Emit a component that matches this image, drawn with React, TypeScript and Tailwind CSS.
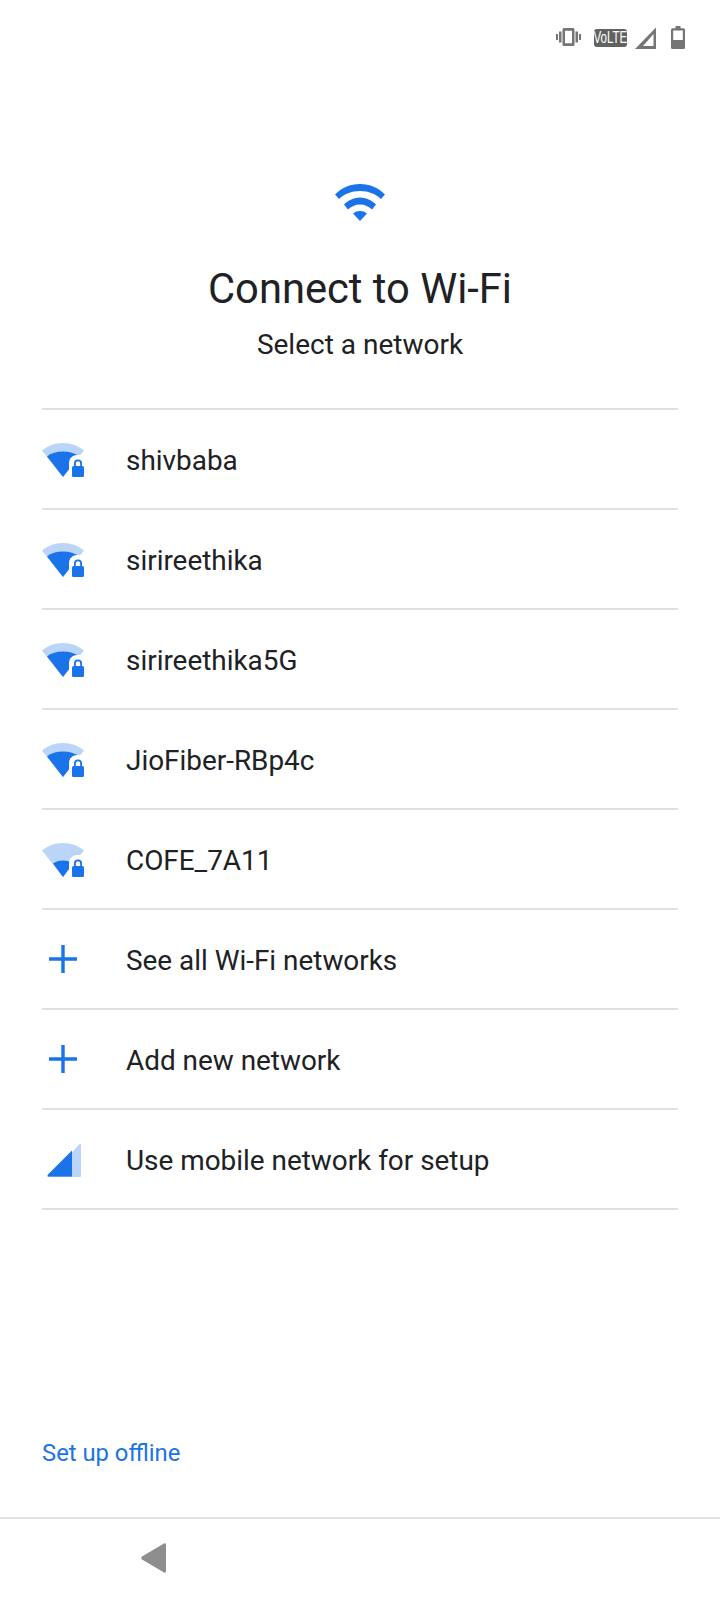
import type { ReactNode } from "react";

const BLUE = "#1a73e8";
const LIGHT = "#bbd5f8";

function VibrateIcon() {
  return (
    <svg width="25" height="18" viewBox="0 0 25 18" fill="#757575" aria-hidden>
      <path d="M0 6h2v6H0zM3 3.500h2.500v11H3zM19.500 3.500H22v11h-2.500zM23 6h2v6h-2z" />
      <path fillRule="evenodd" d="M8 0h9a1.500 1.500 0 0 1 1.500 1.500v15A1.500 1.500 0 0 1 17 18H8a1.500 1.500 0 0 1-1.500-1.500v-15A1.500 1.500 0 0 1 8 0zm1 2.800v12.400h7V2.800z" />
    </svg>
  );
}

function SignalOutline() {
  return (
    <svg width="22" height="22" viewBox="0 0 22 22" fill="#757575" aria-hidden>
      <path fillRule="evenodd" d="M21 0.500V22H0zM18.500 7 8 19h10.500z" />
    </svg>
  );
}

function BatteryIcon() {
  return (
    <svg width="14" height="23" viewBox="0 0 14 23" fill="#757575" aria-hidden>
      <path fillRule="evenodd" d="M4.500 0h5v2.200H12.500A1.500 1.500 0 0 1 14 3.700V21.500a1.500 1.500 0 0 1-1.500 1.500h-11A1.500 1.500 0 0 1 0 21.500V3.700A1.500 1.500 0 0 1 1.500 2.200H4.500zM2.200 4.400v9.600h9.600V4.400z" />
    </svg>
  );
}

function WifiHero() {
  return (
    <svg width="50" height="38" viewBox="0 0 50 38" fill={BLUE} aria-hidden>
      <path d="M0 10.500C6.500 4 15.200 0 25 0S43.500 4 50 10.500L46 15C41 10 33.500 7 25 7S9 10 4 15z" />
      <path d="M9 20.500C13 16.500 19 13.500 25 13.500s12 3 16 7L37 25.500C33.800 22.500 29.700 20.500 25 20.500S16.200 22.500 13 25.500z" />
      <path d="M18 29.500C20 27.800 22.500 27 25 27s5 .8 7 2.500L25 37z" />
    </svg>
  );
}

function WifiLockIcon({ level }: { level: "high" | "low" }) {
  return (
    <svg width="42" height="34" viewBox="0 0 42 34" aria-hidden>
      <path d="M0 7.500C5 3 12.500 0 21 0S37 3 42 7.500L21 34z" fill={LIGHT} />
      {level === "high" ? (
        <path d="M5 13.500C9 10.200 14.500 8.500 21 8.500S33 10.200 37 13.500L21 34z" fill={BLUE} />
      ) : (
        <path d="M11 20.500C13.800 18.500 17 17.500 21 17.500S28.200 18.500 31 20.500L21 34z" fill={BLUE} />
      )}
      <path d="M27 34V20C27 15 31 12 35 12H42V34z" fill="#fff" />
      <path d="M32 23v-2.500a4 4 0 0 1 8 0V23h-1.800v-2.500a2.200 2.200 0 0 0-4.400 0V23z" fill={BLUE} />
      <rect x="30" y="23" width="12" height="11" rx="1.500" fill={BLUE} />
    </svg>
  );
}

function PlusIcon() {
  return (
    <svg width="28" height="28" viewBox="0 0 28 28" fill={BLUE} aria-hidden>
      <path d="M12.300 0h3.400v12.300H28v3.400H15.700V28h-3.400V15.700H0v-3.400h12.300z" />
    </svg>
  );
}

function MobileIcon() {
  return (
    <svg width="34" height="34" viewBox="0 0 34 34" aria-hidden>
      <path d="M25 9.500 32 1.500C33 0.500 34 1 34 2V32.500C34 33.500 33.500 34 32.500 34H25z" fill={LIGHT} />
      <path d="M25 7.500V34H2C0.500 34 0 32.500 1 31.500z" fill={BLUE} />
      <path d="M1 33H25V34H2C1 34 0.500 33.600 1 33z" fill="#5f9bee" />
    </svg>
  );
}

const rows: { label: string; icon: ReactNode; box: string }[] = [
  { label: "shivbaba", icon: <WifiLockIcon level="high" />, box: "pl-0 pt-[2px]" },
  { label: "sirireethika", icon: <WifiLockIcon level="high" />, box: "pl-0 pt-[2px]" },
  { label: "sirireethika5G", icon: <WifiLockIcon level="high" />, box: "pl-0 pt-[2px]" },
  { label: "JioFiber-RBp4c", icon: <WifiLockIcon level="high" />, box: "pl-0 pt-[2px]" },
  { label: "COFE_7A11", icon: <WifiLockIcon level="low" />, box: "pl-0 pt-[2px]" },
  { label: "See all Wi-Fi networks", icon: <PlusIcon />, box: "pl-[7px]" },
  { label: "Add new network", icon: <PlusIcon />, box: "pl-[7px]" },
  { label: "Use mobile network for setup", icon: <MobileIcon />, box: "pl-[5px] pt-[2px]" },
];

export default function App() {
  return (
    <div className="flex h-[1600px] w-[720px] flex-col bg-white font-['Roboto',sans-serif] text-[#202124]">
      <div className="flex h-[74px] items-start justify-end pr-[35px] pt-[26px]">
        <div className="mt-[2px]"><VibrateIcon /></div>
        <div className="ml-[13px] mt-[3px] flex h-[18px] w-[33px] items-center justify-center overflow-hidden rounded-[3px] bg-[#616161] font-['Liberation_Sans',sans-serif] text-[16px] leading-none text-white">
          <span className="scale-x-[0.72]">VoLTE</span>
        </div>
        <div className="ml-[8px] mt-[1px]"><SignalOutline /></div>
        <div className="ml-[14px]"><BatteryIcon /></div>
      </div>

      <div className="ml-[335px] mt-[110px] w-[50px]"><WifiHero /></div>
      <h1 className="mt-[41px] text-center text-[41.7px] font-normal leading-[52px]">Connect to Wi-Fi</h1>
      <p className="mt-[12px] text-center text-[28px] leading-[36px]">Select a network</p>

      <ul className="mx-[42px] mt-[45px] border-t-2 border-[#e0e0e0]">
        {rows.map((row) => (
          <li key={row.label} className="flex h-[100px] items-center border-b-2 border-[#e0e0e0]">
            <div className={`w-[84px] ${row.box}`}>{row.icon}</div>
            <span className="pt-[4px] text-[27.9px] leading-[36px]">{row.label}</span>
          </li>
        ))}
      </ul>

      <div className="mt-auto px-[42px] pb-[46px] text-[23.8px] leading-[36px] text-[#1a73e8]">Set up offline</div>

      <div className="flex h-[83px] items-start border-t-2 border-[#e0e0e0] pl-[141px] pt-[24px]">
        <svg width="25" height="30" viewBox="0 0 25 30" fill="#8e8e8e" aria-hidden>
          <path d="M23 0.500C24 0 25 0.500 25 2V28C25 29.500 24 30 23 29.500L1 16.500C0 15.800 0 14.200 1 13.500z" />
        </svg>
      </div>
    </div>
  );
}
